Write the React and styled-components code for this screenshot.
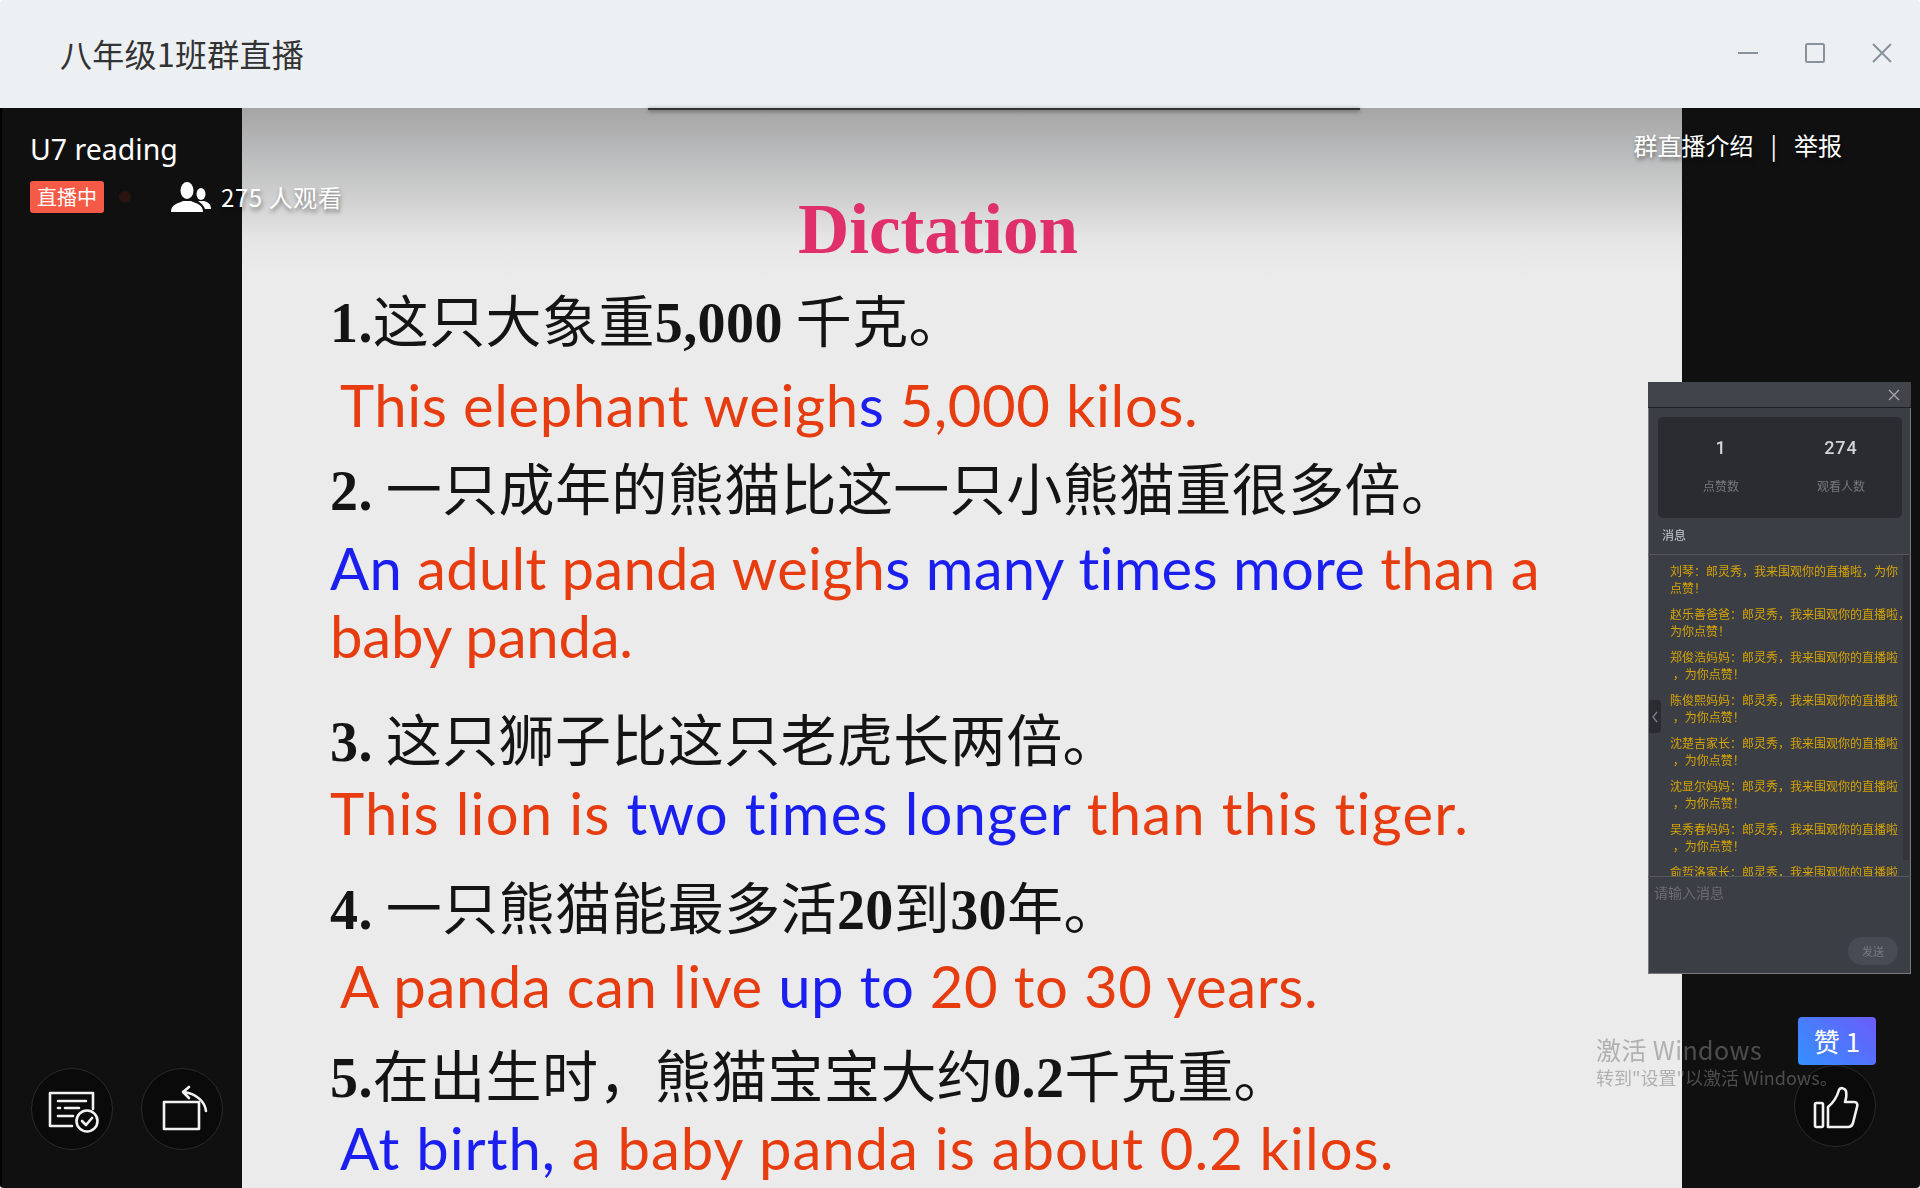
import React from 'react'
import styled, { createGlobalStyle } from 'styled-components'

const CJK = '"Noto Sans CJK SC", "Noto Sans", sans-serif'

const Global = createGlobalStyle`
  html, body { margin: 0; padding: 0; background: #fff; }
  body { font-family: ${CJK}; }
`

const Win = styled.div`
  width: 1920px;
  height: 1188px;
  display: flex;
  flex-direction: column;
  overflow: hidden;
  border-radius: 4px;
`

const TitleBar = styled.header`
  height: 108px;
  flex: none;
  display: flex;
  align-items: center;
  justify-content: space-between;
  padding: 0 28px 0 60px;
  background: #edf0f3;
  box-sizing: border-box;
`

const Title = styled.div`
  font-size: 32px;
  letter-spacing: 0.3px;
  color: #333;
  line-height: 1;
  margin-bottom: 2px;
`

const WinBtns = styled.div`
  display: flex;
  align-items: center;
  gap: 47px;
  margin-bottom: 2px;
`

const WinIcon = styled.svg`
  width: 20px;
  height: 20px;
  display: block;
  stroke: #87929d;
  stroke-width: 2;
  fill: none;
`

const Stage = styled.main`
  position: relative;
  flex: 1;
  display: flex;
  justify-content: center;
  background: #101011;
  border-left: 2px solid #000;
  padding-left: 2px;
  min-height: 0;
`

const Slide = styled.section`
  position: relative;
  width: 1440px;
  height: 1080px;
  box-sizing: border-box;
  padding: 90px 0 0 88px;
  background: linear-gradient(#a5a5a6 0, #bcbdbe 50px, #d2d2d2 95px, #e6e6e6 132px, #ebebeb 170px);
  filter: blur(0.4px);

  &::before {
    content: '';
    position: absolute;
    left: 406px;
    top: 0;
    width: 712px;
    height: 2px;
    background: #333;
    box-shadow: 0 1px 4px rgba(0, 0, 0, 0.6);
  }
`

const Heading = styled.h1`
  margin: 0 0 0 468px;
  height: 62px;
  font: bold 71px/62px "Liberation Serif", serif;
  color: #e0306b;
  white-space: nowrap;
`

const Question = styled.div`
  height: 68px;
  margin-top: ${(p) => p.$gap}px;
  font-size: 56px;
  letter-spacing: 0.4px;
  line-height: 60px;
  color: #141414;
  white-space: nowrap;
`

const Num = styled.span`
  font-family: "Liberation Serif", serif;
  font-weight: bold;
`

const Answer = styled.div`
  height: 68px;
  margin-top: ${(p) => p.$gap}px;
  margin-left: ${(p) => p.$indent || 0}px;
  font-family: Lato, sans-serif;
  font-size: 58px;
  letter-spacing: ${(p) => p.$ls || 0}px;
  line-height: 66px;
  white-space: pre;
`

const Seg = styled.span`
  color: ${(p) => (p.$blue ? '#1a1ff0' : '#e63c10')};
`

const Info = styled.div`
  position: absolute;
  left: 28px;
  top: 21px;
  color: #fff;
`

const RoomName = styled.div`
  font-family: "Noto Sans", ${CJK};
  font-size: 28.5px;
  line-height: 40px;
`

const InfoRow = styled.div`
  display: flex;
  align-items: center;
  margin-top: 10px;
`

const LiveBadge = styled.span`
  width: 74px;
  height: 32px;
  background: #f55a47;
  border-radius: 3px;
  font-size: 20px;
  line-height: 32px;
  text-align: center;
`

const LiveDot = styled.span`
  width: 12px;
  height: 12px;
  margin-left: 15px;
  border-radius: 50%;
  background: #2a1412;
`

const Viewers = styled.span`
  display: flex;
  align-items: center;
  gap: 10px;
  margin-left: 40px;
  font-size: 24px;
  letter-spacing: 0.6px;
  text-shadow: 1px 3px 4px rgba(0, 0, 0, 0.45);
`

const TopLinks = styled.div`
  position: absolute;
  right: 78px;
  top: 20px;
  display: flex;
  gap: 17px;
  color: #fff;
  font-size: 24px;
  line-height: 34px;
  text-shadow: 1px 3px 4px rgba(0, 0, 0, 0.45);
`

const Panel = styled.aside`
  position: absolute;
  left: 1646px;
  top: 274px;
  width: 263px;
  height: 592px;
  display: flex;
  flex-direction: column;
  background: #3c3e45;
  box-shadow: inset 0 0 0 1px #77797e;
  filter: blur(0.7px);
`

const PanelHead = styled.div`
  height: 25px;
  flex: none;
  display: flex;
  align-items: center;
  justify-content: flex-end;
  padding-right: 11px;
  background: #41444b;
  border-bottom: 1px solid #1f2024;
`

const Stats = styled.div`
  margin: 9px 9px 0 10px;
  height: 101px;
  flex: none;
  display: grid;
  grid-template-columns: 1fr 1fr;
  background: #2b2c31;
  border-radius: 5px;
`

const Stat = styled.div`
  display: flex;
  flex-direction: column;
  align-items: center;
  padding-top: 20px;
  padding-left: ${(p) => p.$pl || 0}px;
`

const StatNum = styled.div`
  font-family: Roboto, sans-serif;
  font-weight: 500;
  font-size: 18px;
  letter-spacing: 1px;
  line-height: 22px;
  color: #d4d4d6;
`

const StatLabel = styled.div`
  margin-top: 19px;
  font-size: 12px;
  line-height: 16px;
  color: #76777c;
`

const MsgTitle = styled.div`
  height: 37px;
  flex: none;
  padding-left: 14px;
  font-size: 12px;
  line-height: 33px;
  color: #c9ccd2;
  border-bottom: 1px solid #55575d;
  box-sizing: border-box;
`

const MsgList = styled.div`
  position: relative;
  height: 322px;
  flex: none;
  overflow: hidden;
  padding: 7px 0 0 22px;
  box-sizing: border-box;
  border-bottom: 1px solid #55575d;

  &::after {
    content: '';
    position: absolute;
    right: 2px;
    top: 0;
    bottom: 16px;
    width: 6px;
    background: #33353a;
  }
`

const Msg = styled.div`
  margin-bottom: 9px;
  font-size: 12px;
  line-height: 17px;
  color: #d6a406;
  white-space: pre;
`

const Placeholder = styled.div`
  padding: 5px 0 0 6px;
  font-size: 14px;
  line-height: 20px;
  color: #6b6d73;
`

const SendBtn = styled.div`
  align-self: flex-end;
  margin: 35px 13px 0 0;
  width: 50px;
  height: 28px;
  border-radius: 14px;
  background: #484b53;
  color: #797b81;
  font-size: 11px;
  line-height: 28px;
  text-align: center;
`

const Collapse = styled.div`
  position: absolute;
  left: 1px;
  top: 318px;
  width: 12px;
  height: 33px;
  display: flex;
  align-items: center;
  justify-content: center;
  background: #2b2c31;
  border-radius: 0 4px 4px 0;
`

const Tools = styled.div`
  position: absolute;
  left: 29px;
  bottom: 38px;
  display: flex;
  gap: 28px;
`

const RoundBtn = styled.button`
  width: 82px;
  height: 82px;
  padding: 0;
  border-radius: 50%;
  border: 1px solid #2b2b2b;
  box-sizing: border-box;
  background: #0a0a0a;
  display: block;
`

const BtnIcon = styled.svg`
  display: block;
  width: 80px;
  height: 80px;
  fill: none;
  stroke: #f2f2f2;
  stroke-width: 2.6;
  stroke-linecap: round;
  stroke-linejoin: round;
`

const LikeWrap = styled.div`
  position: absolute;
  right: 44px;
  bottom: 41px;
  display: flex;
  flex-direction: column;
  align-items: flex-end;
`

const LikeBadge = styled.div`
  width: 78px;
  height: 48px;
  border-radius: 4px;
  background: linear-gradient(45deg, #3391fc, #6b5cfc);
  color: #fff;
  font-size: 26px;
  line-height: 48px;
  text-align: center;
`

const Watermark = styled.div`
  position: absolute;
  left: 1594px;
  top: 924px;
  color: rgba(128, 128, 128, 0.55);
  filter: blur(0.5px);
  white-space: nowrap;
  pointer-events: none;
`

const WmTop = styled.div`
  font-size: 25px;
  letter-spacing: 0.4px;
  line-height: 34px;
`

const WmSub = styled.div`
  font-size: 18px;
  line-height: 22px;
`

const UsersIcon = () => (
  <svg width="40" height="30" viewBox="0 0 40 30" fill="#fff" style={{ display: 'block' }}>
    <ellipse cx="16" cy="8.5" rx="6.5" ry="8.5" />
    <path d="M0 30c0-6 4-8 10-10l2-1h8l2 1c6 2 10 4 10 10z" />
    <ellipse cx="30" cy="12" rx="4.5" ry="6" />
    <path d="M27 19h6c4 1 7 3 7 8h-6c-1-3-3-5-7-8z" />
  </svg>
)

const messages = [
  ['刘琴：郎灵秀，我来围观你的直播啦，为你', '点赞！'],
  ['赵乐善爸爸：郎灵秀，我来围观你的直播啦，', '为你点赞！'],
  ['郑俊浩妈妈：郎灵秀，我来围观你的直播啦', ' ，为你点赞！'],
  ['陈俊熙妈妈：郎灵秀，我来围观你的直播啦', ' ，为你点赞！'],
  ['沈楚吉家长：郎灵秀，我来围观你的直播啦', ' ，为你点赞！'],
  ['沈显尔妈妈：郎灵秀，我来围观你的直播啦', ' ，为你点赞！'],
  ['吴秀春妈妈：郎灵秀，我来围观你的直播啦', ' ，为你点赞！'],
  ['俞哲洛家长：郎灵秀，我来围观你的直播啦', ' ，为你点赞！'],
]

const Line = ({ segs, ...rest }) => (
  <Answer {...rest}>
    {segs.map(([t, blue], i) => (
      <Seg key={i} $blue={blue}>{t}</Seg>
    ))}
  </Answer>
)

export default function App() {
  return (
    <Win>
      <Global />
      <TitleBar>
        <Title>八年级1班群直播</Title>
        <WinBtns>
          <WinIcon viewBox="0 0 20 20"><path d="M0 10h20" /></WinIcon>
          <WinIcon viewBox="0 0 20 20"><rect x="1" y="1" width="18" height="18" rx="1.5" /></WinIcon>
          <WinIcon viewBox="0 0 20 20"><path d="M1 1l18 18M19 1L1 19" /></WinIcon>
        </WinBtns>
      </TitleBar>
      <Stage>
        <Slide>
          <Heading>Dictation</Heading>
          <Question $gap={28}><Num>1.</Num>这只大象重<Num>5,000</Num> 千克。</Question>
          <Line $gap={16} $indent={10} $ls={0.6} segs={[['This elephant weigh'], ['s', 1], [' 5,000 kilos.']]} />
          <Question $gap={16}><Num>2.</Num> 一只成年的熊猫比这一只小熊猫重很多倍。</Question>
          <Line $gap={11} $ls={0.25} segs={[['An', 1], [' adult panda weigh'], ['s many times more', 1], [' than a']]} />
          <Line $gap={0} $ls={-0.2} segs={[['baby panda.']]} />
          <Question $gap={36}><Num>3.</Num> 这只狮子比这只老虎长两倍。</Question>
          <Line $gap={5} $ls={1.15} segs={[['This lion is '], ['two times longer', 1], [' than this tiger.']]} />
          <Question $gap={27}><Num>4.</Num> 一只熊猫能最多活<Num>20</Num>到<Num>30</Num>年。</Question>
          <Line $gap={10} $indent={10} $ls={0.6} segs={[['A panda can live '], ['up to', 1], [' 20 to 30 years.']]} />
          <Question $gap={22}><Num>5.</Num>在出生时，熊猫宝宝大约<Num>0.2</Num>千克重。</Question>
          <Line $gap={4} $indent={10} $ls={1} segs={[['At birth,', 1], [' a baby panda is about 0.2 kilos.']]} />
        </Slide>

        <Info>
          <RoomName>U7 reading</RoomName>
          <InfoRow>
            <LiveBadge>直播中</LiveBadge>
            <LiveDot />
            <Viewers><UsersIcon />275 人观看</Viewers>
          </InfoRow>
        </Info>
        <TopLinks>
          <span>群直播介绍</span>
          <span>|</span>
          <span>举报</span>
        </TopLinks>

        <Panel>
          <PanelHead>
            <svg width="12" height="12" viewBox="0 0 12 12" stroke="#a9abb0" strokeWidth="1.2"><path d="M1 1l10 10M11 1L1 11" /></svg>
          </PanelHead>
          <Stats>
            <Stat $pl={4}><StatNum>1</StatNum><StatLabel>点赞数</StatLabel></Stat>
            <Stat><StatNum>274</StatNum><StatLabel>观看人数</StatLabel></Stat>
          </Stats>
          <MsgTitle>消息</MsgTitle>
          <MsgList>
            {messages.map((m, i) => (
              <Msg key={i}>{m[0]}{'\n'}{m[1]}</Msg>
            ))}
          </MsgList>
          <Placeholder>请输入消息</Placeholder>
          <SendBtn>发送</SendBtn>
          <Collapse>
            <svg width="8" height="14" viewBox="0 0 8 14" fill="none" stroke="#7c7e84" strokeWidth="1.4"><path d="M6 2L2 7l4 5" /></svg>
          </Collapse>
        </Panel>

        <Tools>
          <RoundBtn>
            <BtnIcon viewBox="0 0 80 80">
              <path d="M40 57H18V24h43v16" />
              <path d="M26 32h28M33 39h14M26 47h15M26 39h2" />
              <circle cx="55" cy="52" r="10.5" />
              <path d="M50 52l4 4 6-7" />
            </BtnIcon>
          </RoundBtn>
          <RoundBtn>
            <BtnIcon viewBox="0 0 80 80">
              <rect x="22" y="33" width="35" height="27" />
              <path d="M64 42c-1-9-9-17-22-19M47 18l-6 5 6 6" />
            </BtnIcon>
          </RoundBtn>
        </Tools>

        <LikeWrap>
          <LikeBadge>赞 1</LikeBadge>
          <RoundBtn>
            <BtnIcon viewBox="0 0 80 80">
              <rect x="20" y="37" width="8" height="24" rx="1.5" />
              <path d="M33 61V41c5-4 9-10 11-17 1-3 6-2 7 1 1 4 0 8-1 11h9c3 0 4 2 3 5l-4 16c-1 3-2 4-5 4z" />
            </BtnIcon>
          </RoundBtn>
        </LikeWrap>

        <Watermark>
          <WmTop>激活 Windows</WmTop>
          <WmSub>转到"设置"以激活 Windows。</WmSub>
        </Watermark>
      </Stage>
    </Win>
  )
}
